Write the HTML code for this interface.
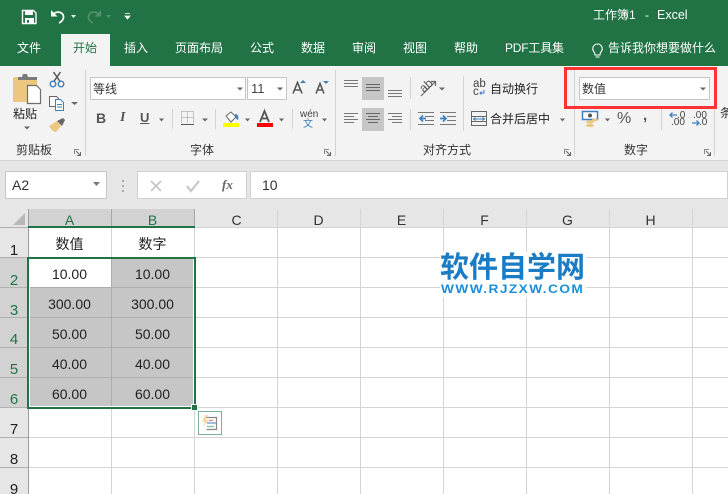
<!DOCTYPE html>
<html><head><meta charset="utf-8">
<style>
html,body{margin:0;padding:0;background:#fff}
#p{position:relative;width:728px;height:494px;overflow:hidden;font-family:"Liberation Sans","Noto Sans CJK SC",sans-serif;font-size:12px;color:#333;background:#fff}
#p div,#p span.t{position:absolute}
.t{white-space:nowrap;line-height:16px}
.w{color:#fff}
.tab{color:#fff;font-size:12px;top:40px}
.cell{font-size:14px;color:#222;text-align:center;width:83px;line-height:18px;height:18px}
.rh{width:28px;text-align:center;font-size:15px;color:#222;line-height:18px;left:0}
.ch{text-align:center;font-size:14px;color:#333;width:83px;top:212px;line-height:16px}
svg{position:absolute;overflow:visible}
</style></head><body><div id="p">
<!-- title + tabs -->
<div style="left:0;top:0;width:728px;height:66px;background:#217346"></div>
<div style="left:61px;top:34px;width:49px;height:32px;background:#f3f3f3"></div>
<svg style="left:0;top:0" width="140" height="34">
<path d="M22.500 10.500h11l2.500 2.500v10.500h-13.500z" fill="none" stroke="#fff" stroke-width="1.400"/>
<rect x="25" y="10" width="8" height="5" fill="#fff"/><path d="M25 18h9v6h-9zM27 20v3h2v-3z" fill="#fff" fill-rule="evenodd"/>
<path d="M53 15c2-4 9-4 10.500 1 .5 3-2 6-4.500 7" fill="none" stroke="#fff" stroke-width="1.700"/><path d="M51 10v6.500h6.500z" fill="#fff"/>
<path d="M71 15h5l-2.500 3z" fill="#e8f0ea"/>
<path d="M99 15c-2-4-9-4-10.500 1-.5 3 2 6 4.500 7" fill="none" stroke="#52906d" stroke-width="1.700"/><path d="M101 10v6.500h-6.500z" fill="#52906d"/>
<path d="M106 15h5l-2.500 3z" fill="#52906d"/>
<path d="M125 13.500h5M125 16h5l-2.500 3z" fill="#fff" stroke="#fff" stroke-width=".8"/>
</svg>
<span class="t w" style="left:593px;top:7px">工作簿1</span>
<span class="t w" style="left:645px;top:7px">-</span>
<span class="t w" style="left:657px;top:7px;font-size:12.500px">Excel</span>
<span class="t tab" style="left:17px">文件</span>
<span class="t" style="left:73px;top:40px;color:#217346">开始</span>
<span class="t tab" style="left:124px">插入</span>
<span class="t tab" style="left:175px">页面布局</span>
<span class="t tab" style="left:250px">公式</span>
<span class="t tab" style="left:301px">数据</span>
<span class="t tab" style="left:352px">审阅</span>
<span class="t tab" style="left:403px">视图</span>
<span class="t tab" style="left:454px">帮助</span>
<span class="t tab" style="left:505px;letter-spacing:-.2px">PDF工具集</span>
<svg style="left:590px;top:42px" width="15" height="18"><path d="M4 10c-3-4 0-8 3.500-8s6.500 4 3.500 8c-1 1-1 2-1 3h-5c0-1 0-2-1-3zM5.500 15h4" fill="none" stroke="#fff" stroke-width="1.100"/></svg>
<span class="t tab" style="left:608px">告诉我你想要做什么</span>

<!-- ribbon -->
<div style="left:0;top:66px;width:728px;height:94px;background:#f3f3f3"></div>
<div style="left:0;top:160px;width:728px;height:1px;background:#d4d4d4"></div>
<div style="left:0;top:161px;width:728px;height:48px;background:#e6e6e6"></div>
<div style="left:85px;top:70px;width:1px;height:86px;background:#d2d2d2"></div>
<div style="left:335px;top:70px;width:1px;height:86px;background:#d2d2d2"></div>
<div style="left:574px;top:70px;width:1px;height:86px;background:#d2d2d2"></div>
<div style="left:714px;top:70px;width:1px;height:86px;background:#d2d2d2"></div>

<!-- clipboard -->
<svg style="left:0;top:66px" width="85" height="90">
<rect x="13" y="11" width="24" height="25" rx="1" fill="#edc77f"/>
<path d="M18 11h4l1-3h4l1 3h9v3h-19z" fill="#7a7a7a"/>
<path d="M27.500 19.500h9l4 4v14h-13z" fill="#fff" stroke="#6e6e6e" stroke-width="1.200"/>
<path d="M53.500 6l7 10M60.500 6l-7 10" stroke="#555" stroke-width="1.500"/><circle cx="53" cy="18" r="2.800" fill="none" stroke="#3f7fbe" stroke-width="1.400"/><circle cx="61" cy="18" r="2.800" fill="none" stroke="#3f7fbe" stroke-width="1.400"/>
<path d="M49.500 30.500h7l2 2v8h-9z" fill="#fff" stroke="#666"/><path d="M55.500 33.500h5l3 3v8h-8z" fill="#fff" stroke="#3f7fbe"/><path d="M57 38.500h5M57 41h5" stroke="#3f7fbe"/>
<path d="M71 36h7l-3.500 3z" fill="#666"/>
<path d="M24 60.500h6l-3 3z" fill="#666"/>
<path d="M49 60l8-5 4 5-5 6c-3 0-5-3-7-6z" fill="#edc77f"/><path d="M57 55l6-3 2 2-3 6z" fill="#666"/>
</svg>
<span class="t" style="left:13px;top:106px;font-size:12px;color:#222">粘贴</span>
<span class="t" style="left:16px;top:142px;font-size:12px;color:#333">剪贴板</span>
<svg style="left:73px;top:148px" width="10" height="10"><path d="M1.500 6V1.500H6" fill="none" stroke="#888"/><path d="M3 3l4 4M4 7.500h3.500V4" fill="none" stroke="#666"/></svg>

<!-- font -->
<div style="left:90px;top:77px;width:156px;height:23px;background:#fff;border:1px solid #c6c6c6;box-sizing:border-box"></div>
<div style="left:247px;top:77px;width:40px;height:23px;background:#fff;border:1px solid #c6c6c6;box-sizing:border-box"></div>
<span class="t" style="left:93px;top:81px;color:#333">等线</span>
<span class="t" style="left:251px;top:81px;color:#444;font-size:13px">11</span>
<svg style="left:0;top:0" width="340" height="160">
<path d="M237 87.500h6l-3 3zM277 87.500h6l-3 3z" fill="#666"/>
<path d="M159 118.500h5l-2.500 3zM202 118.500h6l-3 3zM245 118.500h5l-2.500 3zM279 118.500h5l-2.500 3zM322 118.500h5l-2.500 3z" fill="#666"/>
<rect x="172" y="109" width="1" height="20" fill="#d2d2d2"/><rect x="215" y="109" width="1" height="20" fill="#d2d2d2"/><rect x="292" y="109" width="1" height="20" fill="#d2d2d2"/>
<path d="M181.500 111.500h12v12M181.500 111.500v12M187.500 111.500v12M181.500 117.500h12" fill="none" stroke="#999" stroke-dasharray="1 1"/>
<path d="M181 124.500h13" stroke="#555"/>
<path d="M293 93.500l4.500-11 4.500 11M295 90h5" fill="none" stroke="#555" stroke-width="1.600"/><path d="M300 83l3-3 3 3z" fill="#3f7fbe"/>
<path d="M316 93.500l4-10 4 10M318 90h4.500" fill="none" stroke="#555" stroke-width="1.600"/><path d="M323 81h6l-3 3z" fill="#3f7fbe"/>
<path d="M226 116l5-4 5 5-5 5z" fill="#fff" stroke="#666"/><path d="M235 114c3 0 4 3 3 6-2-1-3-3-3-6z" fill="#3f7fbe"/>
<rect x="223" y="123" width="16" height="4" fill="#ff0"/>
<path d="M260 122l4.500-11 4.500 11M262 118.500h5.500" fill="none" stroke="#555" stroke-width="1.800"/>
<rect x="257" y="123" width="16" height="4" fill="#f00"/>
</svg>
<span class="t" style="left:96px;top:110px;font-weight:bold;font-size:14px;color:#555">B</span>
<span class="t" style="left:120px;top:110px;font-style:italic;font-weight:bold;font-size:14px;color:#555;font-family:'Liberation Serif',serif">I</span>
<span class="t" style="left:140px;top:110px;font-weight:bold;font-size:13px;color:#555;text-decoration:underline">U</span>
<span class="t" style="left:300px;top:110px;font-size:10px;line-height:10px;color:#444">wén</span>
<span class="t" style="left:303px;top:119px;font-size:10px;line-height:11px;color:#3f7fbe">文</span>
<span class="t" style="left:190px;top:142px;color:#333">字体</span>
<svg style="left:323px;top:148px" width="10" height="10"><path d="M1.500 6V1.500H6" fill="none" stroke="#888"/><path d="M3 3l4 4M4 7.500h3.500V4" fill="none" stroke="#666"/></svg>

<!-- alignment -->
<div style="left:362px;top:77px;width:22px;height:23px;background:#c6c6c6"></div>
<div style="left:362px;top:108px;width:22px;height:23px;background:#c6c6c6"></div>
<svg style="left:0;top:0" width="560" height="160" fill="none">
<path d="M344 80.500h14M344 83.500h14M344 86.500h14" stroke="#777"/>
<path d="M366 84.500h14M366 87.500h14M366 90.500h14" stroke="#666"/>
<path d="M388 90.500h14M388 93.500h14M388 96.500h14" stroke="#777"/>
<path d="M344 113.500h14M344 116.500h10M344 119.500h14M344 122.500h10" stroke="#777"/>
<path d="M366 113.500h14M368 116.500h10M366 119.500h14M368 122.500h10" stroke="#666"/>
<path d="M388 113.500h14M392 116.500h10M388 119.500h14M392 122.500h10" stroke="#777"/>
<rect x="410" y="77" width="1" height="22" fill="#d2d2d2"/><rect x="410" y="109" width="1" height="21" fill="#d2d2d2"/><rect x="463" y="76" width="1" height="55" fill="#d2d2d2"/>
<path d="M421 96l14-14M431 81.500h4.500v4.500" stroke="#666" stroke-width="1.200"/>
<text x="419" y="91" font-size="12" fill="#555" transform="rotate(-42 424 86)" font-family="Liberation Sans">ab</text>
<path d="M439 87.500h6l-3 3z" fill="#666"/>
<path d="M418 112.500h16M425 116.500h9M425 120.500h9M418 124.500h16" stroke="#777"/><path d="M426 118.500h-6M423 115.500l-3 3 3 3" stroke="#3f7fbe" stroke-width="1.700"/>
<path d="M440 112.500h16M447 116.500h9M447 120.500h9M440 124.500h16" stroke="#777"/><path d="M440 118.500h6M443 115.500l3 3-3 3" stroke="#3f7fbe" stroke-width="1.700"/>
<path d="M471.500 111.500h15v14h-15zM471.500 116.500h15M471.500 121.500h15" stroke="#666"/><path d="M474 119h10M475.500 117.500l-2 1.500 2 1.500M482.500 117.500l2 1.500-2 1.500" stroke="#3f7fbe"/>
<path d="M560 118.500h5l-2.500 3z" fill="#666"/>
<path d="M484 90v3h-4M481.500 91.500l-1.500 1.500 1.500 1.500" stroke="#3f7fbe"/>
</svg>
<span class="t" style="left:473px;top:79px;font-size:11.500px;line-height:10px;color:#444">ab</span>
<span class="t" style="left:473px;top:87px;font-size:11.500px;line-height:10px;color:#444">c</span>
<span class="t" style="left:490px;top:81px;color:#222">自动换行</span>
<span class="t" style="left:490px;top:111px;color:#222">合并后居中</span>
<span class="t" style="left:423px;top:142px;color:#333">对齐方式</span>
<svg style="left:563px;top:148px" width="10" height="10"><path d="M1.500 6V1.500H6" fill="none" stroke="#888"/><path d="M3 3l4 4M4 7.500h3.500V4" fill="none" stroke="#666"/></svg>

<!-- number -->
<div style="left:579px;top:77px;width:131px;height:23px;background:#fff;border:1px solid #c6c6c6;box-sizing:border-box"></div>
<span class="t" style="left:582px;top:81px;color:#333">数值</span>
<div style="left:564px;top:67px;width:153px;height:42px;border:3px solid #ff3333;box-sizing:border-box"></div>
<svg style="left:0;top:0" width="728" height="160" fill="none">
<path d="M700 87.500h6l-3 3z" fill="#666"/>
<rect x="582.500" y="111.500" width="15" height="8" stroke="#3f7fbe" stroke-width="1.500" fill="#fff"/><circle cx="590" cy="115.500" r="2" fill="#555"/>
<ellipse cx="590" cy="122" rx="4" ry="1.600" fill="#edc77f"/><ellipse cx="590" cy="125.500" rx="4" ry="1.600" fill="#edc77f"/><ellipse cx="595" cy="120" rx="3" ry="1.400" fill="#edc77f"/>
<path d="M605 118.500h5l-2.500 3z" fill="#666"/>
<rect x="661" y="109" width="1" height="21" fill="#d2d2d2"/>
<path d="M670 115h7M672.500 112.500l-2.500 2.500 2.500 2.500" stroke="#3f7fbe" stroke-width="1.300"/>
<path d="M692 123h7M696.500 120.500l2.500 2.500-2.500 2.500" stroke="#3f7fbe" stroke-width="1.300"/>
</svg>
<span class="t" style="left:617px;top:111px;font-size:16px;color:#555">%</span>
<span class="t" style="left:643px;top:108px;font-size:15px;font-weight:bold;color:#555">,</span>
<span class="t" style="left:677px;top:111px;font-size:10px;line-height:10px;color:#444">.0</span>
<span class="t" style="left:671px;top:118px;font-size:10px;line-height:10px;color:#444">.00</span>
<span class="t" style="left:693px;top:111px;font-size:10px;line-height:10px;color:#444">.00</span>
<span class="t" style="left:699px;top:118px;font-size:10px;line-height:10px;color:#444">.0</span>
<span class="t" style="left:624px;top:142px;color:#333">数字</span>
<svg style="left:703px;top:148px" width="10" height="10"><path d="M1.500 6V1.500H6" fill="none" stroke="#888"/><path d="M3 3l4 4M4 7.500h3.500V4" fill="none" stroke="#666"/></svg>
<span class="t" style="left:720px;top:105px;color:#333">条</span>

<!-- formula bar -->
<div style="left:5px;top:171px;width:102px;height:28px;background:#fff;border:1px solid #c6c6c6;box-sizing:border-box"></div>
<span class="t" style="left:12px;top:177px;font-size:14px;color:#333">A2</span>
<div style="left:137px;top:171px;width:110px;height:28px;background:#fff;border:1px solid #d0d0d0;box-sizing:border-box"></div>
<svg style="left:0;top:165px" width="250" height="40" fill="none">
<path d="M93 17h7l-3.500 4z" fill="#777"/>
<path d="M122 15h2v2h-2zM122 20h2v2h-2zM122 25h2v2h-2z" fill="#aaa"/>
<path d="M151 16l10 10M161 16l-10 10" stroke="#c6c6c6" stroke-width="1.800"/>
<path d="M187 21l4 5 8-10" stroke="#c6c6c6" stroke-width="2.200"/>
</svg>
<span class="t" style="left:222px;top:177px;font-family:'Liberation Serif',serif;font-style:italic;font-weight:bold;font-size:13px;color:#666">fx</span>
<div style="left:250px;top:171px;width:478px;height:28px;background:#fff;border:1px solid #d0d0d0;box-sizing:border-box"></div>
<span class="t" style="left:262px;top:177px;font-size:14px;color:#333">10</span>

<!-- grid -->
<div style="left:0;top:209px;width:728px;height:18px;background:#e6e6e6"></div>
<div style="left:0;top:227px;width:28px;height:267px;background:#e6e6e6"></div>
<div style="left:28px;top:209px;width:167px;height:18px;background:#d2d2d2"></div>
<div style="left:0;top:258px;width:28px;height:150px;background:#d2d2d2"></div>
<svg style="left:0;top:0" width="728" height="494" fill="none">
<path d="M25 213v12H13z" fill="#b8b8b8"/>
<g stroke="#d4d4d4">
<path d="M111.500 227v267M194.500 209v285M277.500 209v285M360.500 209v285M443.500 209v285M526.500 209v285M609.500 209v285M692.500 209v285"/>
<path d="M28 257.500h700M28 287.500h700M28 317.500h700M28 347.500h700M28 377.500h700M28 407.500h700M28 437.500h700M28 467.500h700"/>
<path d="M195 227.500h533"/>
</g>
<rect x="440" y="252" width="146" height="45" fill="#fff"/>
<path d="M28.500 209v285" stroke="#9c9c9c"/>
<path d="M0 227.500h28M0 257.500h28M0 287.500h28M0 317.500h28M0 347.500h28M0 377.500h28M0 407.500h28M0 437.500h28M0 467.500h28" stroke="#b0b0b0"/>
<path d="M111.500 209v18M194.500 209v18" stroke="#a8a8a8"/>
<rect x="28" y="226" width="167" height="2" fill="#217346"/>
<rect x="29" y="258" width="165" height="149" fill="#fff"/>
<rect x="30" y="259" width="163" height="147" fill="#c6c6c6"/>
<rect x="30" y="259" width="81" height="28" fill="#fff"/>
<path d="M30 317.500h163M30 347.500h163M30 377.500h163M30 287.500h163M111.500 259v147" stroke="#adadad"/>
<rect x="28" y="258" width="167" height="150" stroke="#217346" stroke-width="2"/>
<rect x="191" y="404" width="7" height="7" fill="#fff"/>
<rect x="192" y="405" width="5" height="5" fill="#217346"/>
<rect x="198.500" y="411.500" width="23" height="23" fill="#fff" stroke="#7fb095"/>
<path d="M205 415l-3 7h3l-2 5 6-7h-3l2-5z" fill="#f4d9a6"/>
<path d="M206.500 417.500h10v12h-10" stroke="#888" stroke-width="1.200"/>
<path d="M209 420.500h4" stroke="#e08a78" stroke-width="1.300"/><path d="M207 423h9" stroke="#7fa8d0" stroke-width="1.500"/><path d="M207 426.500h7" stroke="#8cc4ac" stroke-width="1.500"/>
</svg>
<div class="ch" style="left:28px;color:#217346">A</div>
<div class="ch" style="left:111px;color:#217346">B</div>
<div class="ch" style="left:195px">C</div>
<div class="ch" style="left:277px">D</div>
<div class="ch" style="left:360px">E</div>
<div class="ch" style="left:443px">F</div>
<div class="ch" style="left:526px">G</div>
<div class="ch" style="left:609px">H</div>
<div class="rh" style="top:242px">1</div>
<div class="rh" style="top:272px;color:#217346">2</div>
<div class="rh" style="top:302px;color:#217346">3</div>
<div class="rh" style="top:331px;color:#217346">4</div>
<div class="rh" style="top:361px;color:#217346">5</div>
<div class="rh" style="top:391px;color:#217346">6</div>
<div class="rh" style="top:421px">7</div>
<div class="rh" style="top:451px">8</div>
<div class="rh" style="top:481px">9</div>

<div class="cell" style="left:28px;top:235px">数值</div><div class="cell" style="left:111px;top:235px">数字</div>
<div class="cell" style="left:28px;top:265px">10.00</div><div class="cell" style="left:111px;top:265px">10.00</div>
<div class="cell" style="left:28px;top:295px">300.00</div><div class="cell" style="left:111px;top:295px">300.00</div>
<div class="cell" style="left:28px;top:325px">50.00</div><div class="cell" style="left:111px;top:325px">50.00</div>
<div class="cell" style="left:28px;top:355px">40.00</div><div class="cell" style="left:111px;top:355px">40.00</div>
<div class="cell" style="left:28px;top:385px">60.00</div><div class="cell" style="left:111px;top:385px">60.00</div>

<!-- watermark -->
<span class="t" style="left:440px;top:252px;font-size:29px;line-height:32px;font-weight:bold;color:#1a7cc4">软件自学网</span>
<span class="t" style="left:441px;top:283px;font-size:11.500px;line-height:14px;font-weight:bold;color:#1a8fd8;letter-spacing:1.200px;transform:scaleX(1.19);transform-origin:left center">WWW.RJZXW.COM</span>
</div></body></html>
